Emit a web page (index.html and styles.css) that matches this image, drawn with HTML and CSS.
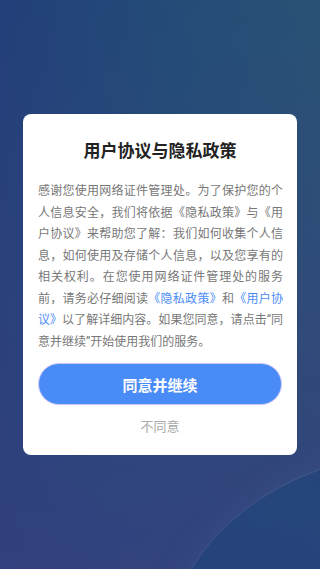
FILE: index.html
```html
<!DOCTYPE html>
<html lang="zh-CN">
<head>
    <meta charset="UTF-8">
    <meta name="viewport" content="width=device-width, initial-scale=1.0">
    <title>用户协议与隐私政策</title>
    <link rel="stylesheet" href="styles.css">
</head>
<body>
    <div class="screen">
        <div class="privacy-dialog">
            <h2 class="dialog-title">用户协议与隐私政策</h2>
            <p class="dialog-text">感谢您使用网络证件管理处。为了保护您的个人信息安全，我们将依据《隐私政策》与《用户协议》来帮助您了解：我们如何收集个人信息，如何使用及存储个人信息，以及您享有的相关权利。在您使用网络证件管理处的服务前，请务必仔细阅读<a href="#" class="dialog-link">《隐私政策》</a>和<a href="#" class="dialog-link">《用户协议》</a>以了解详细内容。如果您同意，请点击“同意并继续”开始使用我们的服务。</p>
            <button class="agree-button">同意并继续</button>
            <button class="disagree-button">不同意</button>
        </div>
    </div>
</body>
</html>
```

FILE: styles.css
```css
/* Fondo de la pantalla */
html, body {
    margin: 0;
    padding: 0;
}

body {
    font-family: Roboto, "Noto Sans CJK SC", sans-serif;
}

.screen {
    position: relative;
    width: 320px;
    height: 569px;
    overflow: hidden;
    display: flex;
    align-items: center;
    justify-content: center;
    background:
        linear-gradient(to bottom, rgba(54, 64, 128, 0) 0%, rgba(54, 62, 128, 0.75) 100%),
        linear-gradient(100deg, #233f7a 0%, #234d77 45%, #2d5573 100%);
}

/* Arco decorativo abajo a la derecha */
.screen::after {
    content: "";
    position: absolute;
    left: 165px;
    top: 452px;
    width: 520px;
    height: 420px;
    border-radius: 50%;
    background-color: rgba(28, 70, 122, 0.55);
    box-shadow: 0 0 0 1px rgba(120, 160, 200, 0.15), 0 0 30px 6px rgba(90, 120, 170, 0.12);
}

/* Ventana del dialogo */
.privacy-dialog {
    position: relative;
    z-index: 1;
    width: 274px;
    box-sizing: border-box;
    padding: 25px 14px 18px 14px;
    background-color: white;
    border-radius: 8px;
    display: flex;
    flex-direction: column;
    align-items: center;
}

.dialog-title {
    margin: 0;
    font-size: 17px;
    line-height: 24px;
    font-weight: bold;
    color: #222;
}

.dialog-text {
    margin: 18px 0 0 0;
    padding-left: 1px;
    font-size: 12px;
    line-height: 21.5px;
    color: #777;
    text-align: justify;
}

.dialog-link {
    color: #4a8cf7;
    text-decoration: none;
}

/* Botones */
.agree-button {
    margin-top: 10px;
    width: 244px;
    height: 42px;
    border: 1px solid #d2c8f4;
    border-radius: 21px;
    background-color: #4a8cf7;
    color: white;
    font-family: inherit;
    font-size: 15px;
    font-weight: bold;
    cursor: pointer;
}

.disagree-button {
    margin-top: 12px;
    padding: 0;
    border: none;
    background: none;
    color: #aaa;
    font-family: inherit;
    font-size: 13px;
    line-height: 20px;
    cursor: pointer;
}
```
